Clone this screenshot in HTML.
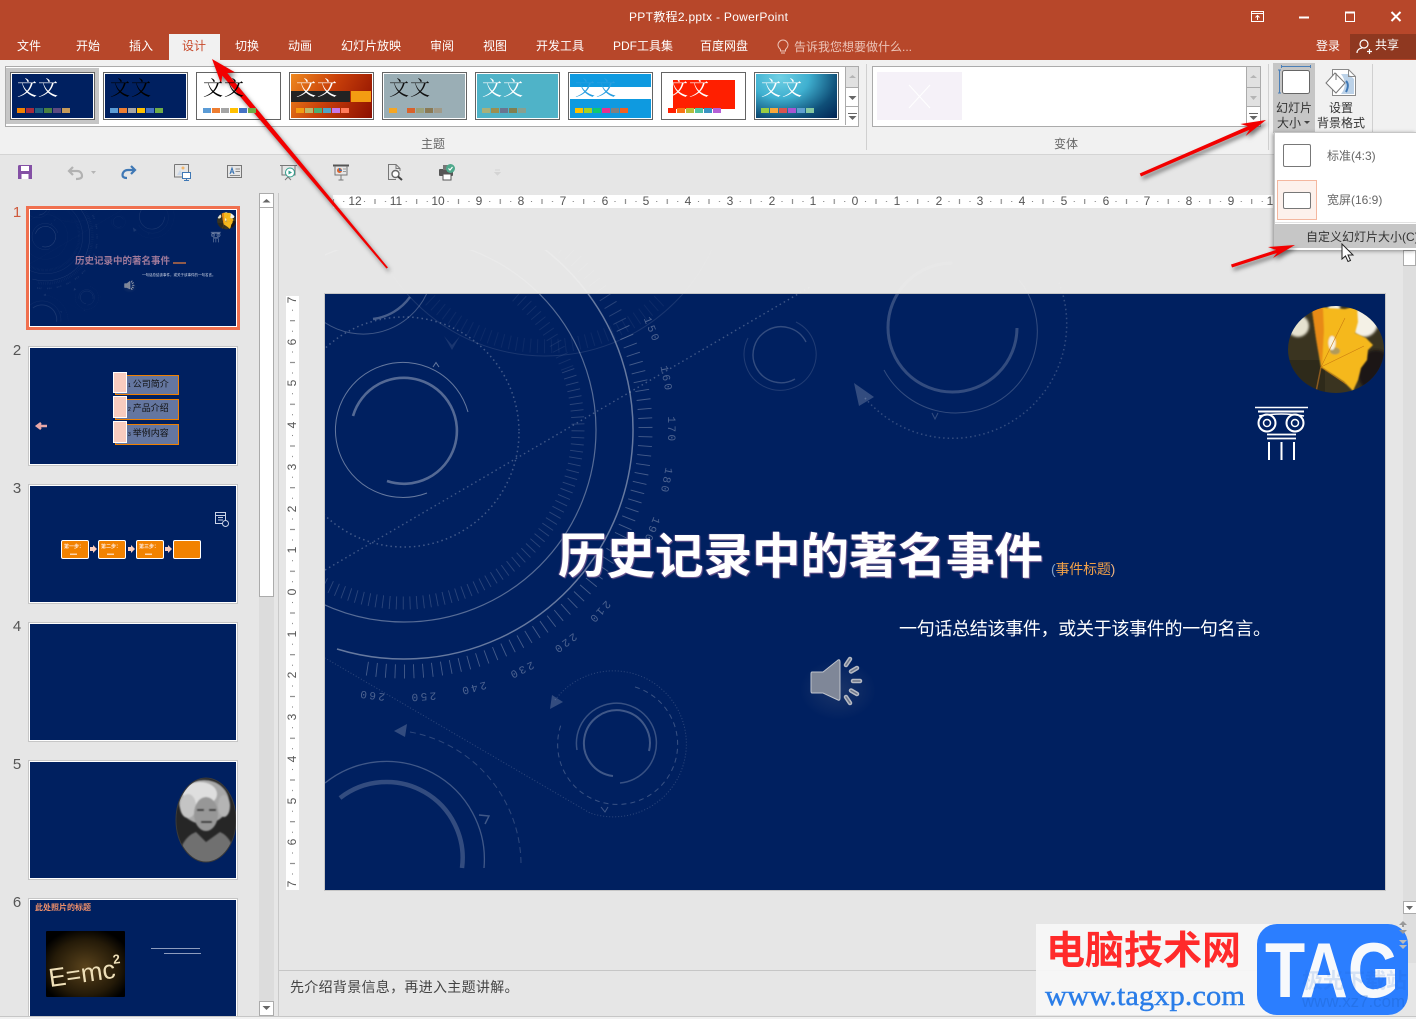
<!DOCTYPE html>
<html lang="zh-CN"><head><meta charset="utf-8"><title>PPT教程2.pptx - PowerPoint</title>
<style>
html,body{margin:0;padding:0}
body{width:1416px;height:1019px;position:relative;overflow:hidden;background:#e6e6e6;font-family:"Liberation Sans","Noto Sans CJK SC",sans-serif;font-size:12px;color:#444}
.a,.t,svg.a{position:absolute}
.t{white-space:nowrap;line-height:16px;display:block}
.tab{color:#fff;top:38px}
.th{position:absolute;top:72px;width:81px;height:44px;border:1px solid #646464;outline:0;box-shadow:inset 0 0 0 1px #fff;padding:1px;overflow:hidden;background:#002060;background-clip:padding-box}
.th b{position:absolute;left:6px;top:2px;font:400 20px/24px "Noto Serif CJK SC","Noto Sans CJK SC",serif;color:#fff;letter-spacing:1px;white-space:nowrap;z-index:2}
.sw{position:absolute;left:6px;top:35px;display:flex;gap:1px;z-index:3}
.sw i{display:block;width:8px;height:5px}
.sl{position:absolute;left:29px;width:206px;height:116px;background:#002060;border:1px solid #fff;outline:1px solid #c6c6c6;overflow:hidden}
.n{position:absolute;left:10px;width:14px;text-align:center;font-size:15px;line-height:18px;color:#555}
.sb{position:absolute;background:#fff;border:1px solid #ababab;box-sizing:border-box}
</style></head>
<body>
<!-- defs -->
<svg width="0" height="0" style="position:absolute">
<defs>
<filter id="soft" x="-5%" y="-5%" width="110%" height="110%"><feGaussianBlur stdDeviation=".7"/></filter>
<filter id="soft2" x="-20%" y="-20%" width="140%" height="140%"><feGaussianBlur stdDeviation="1.200"/></filter>
<radialGradient id="glow"><stop offset="0" stop-color="#30456f" stop-opacity=".55"/><stop offset="1" stop-color="#30456f" stop-opacity="0"/></radialGradient>
<g id="deco" fill="none" stroke="#fff">
 <!-- big ring -->
 <path d="M518.5 231.7A229 229 0 0 1 337 649" stroke-opacity=".4" stroke-width="1.500"/>
 <circle cx="404" cy="430" r="192" stroke-opacity=".34" stroke-width="1.200"/>
 <path d="M524.75 220.9A241.500 241.500 0 0 1 622.9 328" stroke-opacity=".16" stroke-width="14" stroke-dasharray=".9 8.4"/>
 <path d="M622.9 328A241.500 241.500 0 0 1 362 667.8" stroke-opacity=".27" stroke-width="14" stroke-dasharray=".9 8.4"/>
 <path d="M516.5 296A174.500 174.500 0 0 1 568 370.3" stroke-opacity=".08" stroke-width="13" stroke-dasharray=".9 5.9"/>
 <path d="M568 370.3A174.500 174.500 0 1 1 229 430" stroke-opacity=".17" stroke-width="13" stroke-dasharray=".9 5.9"/>
 <!-- dotted -->
 <circle cx="404" cy="432" r="115" stroke-opacity=".26" stroke-width="1.500" stroke-dasharray="1.5 3.2"/>
 <path d="M325 570L810 287" stroke-opacity=".25" stroke-width="1.400" stroke-dasharray="1.5 3.2"/>
 <!-- inner left circle -->
 <path d="M468 412A67.5 67.5 0 1 0 427 493" stroke-opacity=".4" stroke-width="1"/>
 <path d="M353 416A53 53 0 1 1 387 481" stroke-opacity=".33" stroke-width="2.600"/>
 <path d="M433 367l3-4.500 3 4.500" stroke-opacity=".4" stroke-width="1"/>
 <path d="M444 336l8 9 8-9-8 14z" fill="#fff" fill-opacity=".1" stroke="none"/>
 <!-- top arc -->
 <circle cx="545" cy="172" r="184" stroke-opacity=".1" stroke-width="1"/>
 <path d="M430 300A166 166 0 0 0 660 300" stroke-opacity=".05" stroke-width="14" stroke-dasharray="1 6"/>
 <path d="M324 322A70 70 0 0 0 427 293" stroke-opacity=".25" stroke-width="1"/>
 <path d="M373 319A54 54 0 0 0 410 297" stroke-opacity=".28" stroke-width="2.400"/>
 <!-- top right -->
 <path d="M1017 328A64.500 64.500 0 1 1 952.500 263" stroke-opacity=".2" stroke-width="3"/>
 <path d="M884 370A81.500 81.500 0 1 0 1019 280" stroke-opacity=".2" stroke-width="1"/>
 <path d="M865 398A114.500 114.500 0 0 0 1058 280" stroke-opacity=".2" stroke-width="1.500" stroke-dasharray="1.5 3"/>
 <path d="M854 383L874 397 859 406z" fill="#fff" fill-opacity=".2" stroke="none"/>
 <path d="M932 413l3 6 3-6" stroke-opacity=".2"/>
 <path d="M806 342A28 28 0 1 0 795 379" stroke-opacity=".2" stroke-width="1.400"/>
 <path d="M796 322A36 36 0 1 1 748 338" stroke-opacity=".13" stroke-width="1"/>
 <!-- mid bottom circle -->
 <path d="M577 750A40 40 0 1 1 620 783" stroke-opacity=".22" stroke-width="1.500"/>
 <path d="M649 751A33 33 0 1 0 613 776" stroke-opacity=".25" stroke-width="2"/>
 <path d="M635 687A60 60 0 1 1 562 722" stroke-opacity=".22" stroke-width="1" stroke-dasharray="5 4"/>
 <path d="M555 700A73 73 0 1 1 590 813L325 658" stroke-opacity=".18" stroke-width="1" stroke-dasharray="1 2"/>
 <path d="M552 695L550 709 563 702z" fill="#fff" fill-opacity=".2" stroke="none"/>
 <path d="M601 807l4 5 3-5" stroke-opacity=".25"/>
 <!-- bottom left -->
 <path d="M325 783A98 98 0 0 1 484 868" stroke-opacity=".25" stroke-width="1.300"/>
 <path d="M340 798A76 76 0 0 1 462 868" stroke-opacity=".2" stroke-width="4.500"/>
 <path d="M410 732A135 135 0 0 1 521 866" stroke-opacity=".18" stroke-width="1" stroke-dasharray="6 4"/>
 <path d="M394 731L407 724 405 737z" fill="#fff" fill-opacity=".2" stroke="none"/>
 <path d="M479 815l10 1-4 8" stroke-opacity=".25" stroke-width="1.400"/>
 <g fill="#fff" stroke="none" font-family="'Liberation Mono',monospace" font-size="11" letter-spacing="2.500" fill-opacity=".3" text-anchor="middle">
  <text x="672" y="434" transform="rotate(-22 404 430) rotate(90 672 430)">150</text>
  <text x="672" y="434" transform="rotate(-11 404 430) rotate(90 672 430)">160</text>
  <text x="672" y="434" transform="rotate(90 672 430)">170</text>
  <text x="672" y="434" transform="rotate(11 404 430) rotate(90 672 430)">180</text>
  <text x="672" y="434" transform="rotate(22 404 430) rotate(90 672 430)">190</text>
  <text x="672" y="434" transform="rotate(43 404 430) rotate(90 672 430)">210</text>
  <text x="672" y="434" transform="rotate(53 404 430) rotate(90 672 430)">220</text>
  <text x="672" y="434" transform="rotate(64 404 430) rotate(90 672 430)">230</text>
  <text x="672" y="434" transform="rotate(75 404 430) rotate(90 672 430)">240</text>
  <text x="672" y="434" transform="rotate(86 404 430) rotate(90 672 430)">250</text>
  <text x="672" y="434" transform="rotate(97 404 430) rotate(90 672 430)">260</text>
 </g>
</g>
<g id="leaf">
 <clipPath id="lc"><ellipse cx="1336" cy="349.500" rx="48" ry="43.500"/></clipPath>
 <g clip-path="url(#lc)">
  <rect x="1285" y="304" width="102" height="92" fill="#3a3420"/>
  <rect x="1285" y="360" width="40" height="36" fill="#2e2a1a"/>
  <g filter="url(#soft2)">
   <ellipse cx="1298" cy="326" rx="11" ry="11" fill="#e6e2cf"/>
   <ellipse cx="1364" cy="322" rx="14" ry="15" fill="#f4f1e6"/>
   <rect x="1328" y="302" width="12" height="20" fill="#f5f2e6"/>
   <ellipse cx="1376" cy="372" rx="18" ry="22" fill="#1c1916"/>
  </g>
  <path d="M1321 367L1316 392" stroke="#8a5a20" stroke-width="1.500"/>
  <g filter="url(#soft)">
   <path d="M1312 310L1318 306 1328 308 1345 309 1357 306 1358 322 1355 333 1366 338 1373 345 1368 350 1367 360 1361 368 1358 380 1353 391 1344 382 1335 376 1327 371 1321 367 1318 350 1316 338z" fill="#f5b81e"/>
   <path d="M1312 310L1318 306 1323 308 1324 330 1322 366 1318 350 1316 338z" fill="#e88a14"/>
   <ellipse cx="1335" cy="351" rx="5" ry="3.500" fill="#b09a5a"/>
   <ellipse cx="1332" cy="343" rx="3.500" ry="7" fill="#f6f2e2"/>
  </g>
  <path d="M1321 367L1364 346M1321 367L1345 318M1321 367L1346 384" stroke="#c97a10" stroke-width=".6" fill="none"/>
 </g>
</g>
<g id="column" fill="none" stroke="#fff">
 <path d="M1255 407.500H1308" stroke-width="1.500"/><path d="M1258 411.500H1304" stroke-width="2"/>
 <path d="M1259 416Q1281 412 1304 416" stroke-width="1.500"/>
 <circle cx="1267" cy="423" r="8.500" stroke-width="2"/><circle cx="1267" cy="423" r="3.500" stroke-width="1.500"/>
 <circle cx="1295" cy="423" r="8.500" stroke-width="2"/><circle cx="1295" cy="423" r="3.500" stroke-width="1.500"/>
 <path d="M1267 434.500H1296M1267 438.500H1296" stroke-width="1.800"/>
 <path d="M1269 442V460M1281.500 442V460M1294 442V460" stroke-width="2"/>
</g>
<g id="speaker">
 <ellipse cx="838" cy="690" rx="38" ry="30" fill="url(#glow)"/>
 <path d="M812 672H823L838 660Q840 659 840 662V698Q840 701 838 700L823 693H812Q811 693 811 691V674Q811 672 812 672Z" fill="#7f8798" stroke="#c0c4cc" stroke-width="1"/>
 <g stroke="#b6bac3" stroke-width="4.500" stroke-linecap="round" fill="none">
  <path d="M846 665L850 659M851 671.500L857 668M853 681H860M851 690.500L857 694M846 697L850 703"/>
 </g>
 <g stroke="#6d7588" stroke-width="1.500" stroke-linecap="round" fill="none">
  <path d="M846 665L850 659M851 671.500L857 668M853 681H860M851 690.500L857 694M846 697L850 703"/>
 </g>
</g>
<pattern id="rh" x="855" y="195" width="41.750" height="13" patternUnits="userSpaceOnUse">
 <rect x="10" y="6" width="1" height="1" fill="#777"/><rect x="20.500" y="4" width="1" height="5" fill="#777"/><rect x="31" y="6" width="1" height="1" fill="#777"/>
</pattern>
<pattern id="rv" x="286" y="592" width="13" height="41.750" patternUnits="userSpaceOnUse">
 <rect y="10" x="6" width="1" height="1" fill="#777"/><rect y="20.500" x="4" width="5" height="1" fill="#777"/><rect y="31" x="6" width="1" height="1" fill="#777"/>
</pattern>
<radialGradient id="emc" cx=".5" cy=".55" r=".6"><stop offset="0" stop-color="#5a431c"/><stop offset=".7" stop-color="#241a08"/><stop offset="1" stop-color="#000"/></radialGradient>
</defs>
</svg>

<!-- title bar -->
<div class="a" style="left:0;top:0;width:1416px;height:60px;background:#b7472a"></div>
<span class="t" style="left:629px;top:9px;color:#fff;letter-spacing:.3px">PPT教程2.pptx - PowerPoint</span>
<svg class="a" style="left:1245px;top:5px" width="160" height="22" fill="none" stroke="#fff">
 <path d="M6.500 6.500H18.500V16.500H6.500Z M6.500 8.500H18.500"/><path d="M12.500 15V10.500M10.500 12.500L12.500 10.500 14.500 12.500"/>
 <path d="M54 12.500H64" stroke-width="2"/>
 <path d="M100.500 7H109.500V16.500H100.500Z" stroke-width="1"/><path d="M100 7.500H110" stroke-width="2"/>
 <path d="M146.500 7L155.500 16M155.500 7L146.500 16" stroke-width="2"/>
</svg>
<div class="a" style="left:169px;top:34px;width:51px;height:26px;background:#f1f1f1"></div>
<span class="t tab" style="left:17px">文件</span>
<span class="t tab" style="left:76px">开始</span>
<span class="t tab" style="left:129px">插入</span>
<span class="t tab" style="left:182px;color:#c8492a">设计</span>
<span class="t tab" style="left:235px">切换</span>
<span class="t tab" style="left:288px">动画</span>
<span class="t tab" style="left:341px">幻灯片放映</span>
<span class="t tab" style="left:430px">审阅</span>
<span class="t tab" style="left:483px">视图</span>
<span class="t tab" style="left:536px">开发工具</span>
<span class="t tab" style="left:613px">PDF工具集</span>
<span class="t tab" style="left:700px">百度网盘</span>
<svg class="a" style="left:776px;top:39px" width="14" height="16" fill="none" stroke="#ecc4b8"><path d="M4.500 10.500C3 9 2 8 2 6A5 5 0 0 1 12 6C12 8 11 9 9.500 10.500V12H4.500Z"/><path d="M5 14H9"/></svg>
<span class="t tab" style="left:794px;color:#ecc4b8;top:39px">告诉我您想要做什么...</span>
<span class="t tab" style="left:1316px">登录</span>
<div class="a" style="left:1350px;top:34px;width:66px;height:25px;background:#8f3820"></div>
<svg class="a" style="left:1356px;top:38px" width="18" height="17" fill="none" stroke="#fff" stroke-width="1.200"><circle cx="8" cy="6" r="4"/><path d="M1 15C1 12 3 10.500 6 10M11 13.500H16M13.500 11V16"/></svg>
<span class="t tab" style="left:1375px;top:37px">共享</span>

<!-- ribbon -->
<div class="a" style="left:0;top:60px;width:1416px;height:94px;background:#f1f1f1;border-bottom:1px solid #d4d4d4"></div>
<div class="a" style="left:5px;top:66px;width:852px;height:59px;background:#fff;border:1px solid #ababab"></div>
<div class="a" style="left:6px;top:68px;width:93px;height:56px;background:#c6c6c6"></div>

<div class="th" style="left:10px"><b>文文</b><div class="sw"><i style="background:#f28200"></i><i style="background:#a52a3c"></i><i style="background:#1f5f7f"></i><i style="background:#4a8040"></i><i style="background:#5c4a80"></i><i style="background:#c49a5a"></i></div></div>
<div class="th" style="left:103px"><b style="color:#000">文文</b><div class="sw"><i style="background:#5b9bd5"></i><i style="background:#ed7d31"></i><i style="background:#a5a5a5"></i><i style="background:#ffc000"></i><i style="background:#4472c4"></i><i style="background:#70ad47"></i></div></div>
<div class="th" style="left:196px;background:#fff"><b style="color:#000">文文</b><div class="sw"><i style="background:#5b9bd5"></i><i style="background:#ed7d31"></i><i style="background:#a5a5a5"></i><i style="background:#ffc000"></i><i style="background:#4472c4"></i><i style="background:#70ad47"></i></div></div>
<div class="th" style="left:289px;background:linear-gradient(120deg,#ef8a1f 0%,#c9400a 45%,#8a0d00 100%)"><div class="a" style="left:1px;top:18px;width:59px;height:11px;background:#232323"></div><div class="a" style="left:61px;top:18px;width:20px;height:11px;background:#f39c12"></div><b>文文</b><div class="sw"><i style="background:#f39c12"></i><i style="background:#b9b86a"></i><i style="background:#4caf72"></i><i style="background:#4fa3c4"></i><i style="background:#c678e8"></i><i style="background:#ff7b5a"></i></div></div>
<div class="th" style="left:382px;background:#9aaeb5"><b style="color:#111">文文</b><div class="sw"><i style="background:#f5a623"></i><i style="background:#9aaeb5"></i><i style="background:#d9622b"></i><i style="background:#9aa07a"></i><i style="background:#8a7a55"></i><i style="background:#a09a88"></i></div></div>
<div class="th" style="left:475px;background:#4fb3c8"><b>文文</b><div class="sw"><i style="background:#a8b07a"></i><i style="background:#9a8f50"></i><i style="background:#6a7590"></i><i style="background:#808050"></i><i style="background:#88a090"></i></div></div>
<div class="th" style="left:568px;background:#fff"><div class="a" style="left:1px;top:1px;width:81px;height:13px;background:#0e9ae0"></div><div class="a" style="left:1px;top:26px;width:81px;height:19px;background:#0e9ae0"></div><b style="color:#2a9fe0">文文</b><div class="sw"><i style="background:#ffc000"></i><i style="background:#a8d020"></i><i style="background:#10c870"></i><i style="background:#e83090"></i><i style="background:#808080"></i><i style="background:#f06020"></i></div></div>
<div class="th" style="left:661px;background:#fff"><div class="a" style="left:11px;top:7px;width:62px;height:29px;background:#ff1f00"></div><b>文文</b><div class="sw"><i style="background:#ff1f00"></i><i style="background:#f97316"></i><i style="background:#b5bd3a"></i><i style="background:#4fc3a1"></i><i style="background:#3b93c3"></i><i style="background:#b55fd6"></i></div></div>
<div class="th" style="left:754px;background:radial-gradient(ellipse at 30% 10%,#6fd0e4 0%,#3fb0d0 35%,#0f4f78 70%,#002050 100%)"><b>文文</b><div class="sw"><i style="background:#9acd42"></i><i style="background:#f9a83a"></i><i style="background:#d9534f"></i><i style="background:#a855d0"></i><i style="background:#5f9fd0"></i><i style="background:#85c8a0"></i></div></div>

<div class="a" style="left:845px;top:67px;width:12px;height:20px;background:#e1e1e1;border-left:1px solid #ababab;border-bottom:1px solid #ababab"></div>
<div class="a" style="left:845px;top:88px;width:12px;height:18px;background:#fff;border-left:1px solid #ababab;border-bottom:1px solid #ababab"></div>
<div class="a" style="left:845px;top:107px;width:12px;height:18px;background:#fff;border-left:1px solid #ababab"></div>
<svg class="a" style="left:845px;top:67px" width="14" height="60" fill="#666"><path d="M4 11L7.500 8 11 11z" fill="#b5b5b5"/><path d="M3.500 29H11.500L7.500 33z"/><path d="M3 46H12V47H3zM3.500 49H11.500L7.500 53z"/></svg>

<div class="a" style="left:872px;top:66px;width:387px;height:59px;background:#fff;border:1px solid #ababab"></div>
<div class="a" style="left:877px;top:72px;width:85px;height:48px;background:#f5f1f8"></div>
<svg class="a" style="left:877px;top:72px" width="85" height="48" stroke="#fff" stroke-width="1"><path d="M32 13L53 36M53 13L32 36"/></svg>
<div class="a" style="left:1246px;top:67px;width:13px;height:20px;background:#e1e1e1;border-left:1px solid #ababab;border-bottom:1px solid #ababab"></div>
<div class="a" style="left:1246px;top:88px;width:13px;height:18px;background:#e1e1e1;border-left:1px solid #ababab;border-bottom:1px solid #ababab"></div>
<div class="a" style="left:1246px;top:107px;width:13px;height:18px;background:#fff;border-left:1px solid #ababab"></div>
<svg class="a" style="left:1246px;top:67px" width="14" height="60" fill="#666"><path d="M4 11L7.500 8 11 11z" fill="#b5b5b5"/><path d="M4 29H11L7.500 33z" fill="#b5b5b5"/><path d="M3 46H12V47H3zM3.500 49H11.500L7.500 53z"/></svg>

<span class="t" style="left:421px;top:136px;color:#666">主题</span>
<span class="t" style="left:1054px;top:136px;color:#666">变体</span>
<div class="a" style="left:866px;top:64px;width:1px;height:86px;background:#d0d0d0"></div>
<div class="a" style="left:1268px;top:64px;width:1px;height:86px;background:#d0d0d0"></div>
<div class="a" style="left:1372px;top:64px;width:1px;height:68px;background:#d0d0d0"></div>

<div class="a" style="left:1273px;top:63px;width:42px;height:70px;background:#c6c6c6"></div>
<svg class="a" style="left:1276px;top:64px" width="40" height="32" fill="none"><rect x="6.500" y="6.500" width="27" height="23" rx="2" fill="#fff" stroke="#666"/><path d="M5.500 2.500H34.500M5.500 1V4M34.500 1V4M3.500 6V29M2 6H5M2 29H5" stroke="#4a7fb8"/></svg>
<span class="t" style="left:1276px;top:100px;color:#333">幻灯片</span>
<span class="t" style="left:1277px;top:115px;color:#333">大小</span>
<svg class="a" style="left:1303px;top:120px" width="8" height="6"><path d="M1 1H7L4 4z" fill="#444"/></svg>
<svg class="a" style="left:1324px;top:66px" width="36" height="32" fill="none"><path d="M8.500 3.500H24.500L31.500 10.500V29.500H8.500Z" fill="#fff" stroke="#8a8a8a"/><path d="M17 8H24.500L30 13V28H17C22 22 22 14 17 8Z" fill="#bcd2e8"/><path d="M24.500 3.500V10.500H31.500" stroke="#8a8a8a"/><path d="M11 7L21 17 12 27 2 17Z" fill="#fff" stroke="#777"/><path d="M12 7V14" stroke="#777"/><path d="M22 15C25 18 24 22 22 26" stroke="#3f78b5" stroke-width="2"/></svg>
<span class="t" style="left:1329px;top:100px;color:#333">设置</span>
<span class="t" style="left:1317px;top:115px;color:#333">背景格式</span>

<!-- QAT -->
<svg class="a" style="left:0;top:155px" width="510" height="34" fill="none">
 <g transform="translate(18 10)"><path d="M0 1.500Q0 0 1.500 0H14V14H0Z" fill="#8450a5"/><rect x="3" y="1" width="8" height="5" fill="#fff"/><rect x="3.500" y="9" width="7" height="5" fill="#fff"/></g>
 <path d="M73 12L69 16 73 20M69 16H77C81 16 82 19 82 21S80 24 76 24" stroke="#b2b2b2" stroke-width="2.200"/>
 <path d="M91 16H96L93.500 19z" fill="#b5b5b5"/>
 <path d="M131 11L135 15 131 19M135 15H128C124 15 122.500 18 122.500 20S124 23 127 23" stroke="#3f78b5" stroke-width="2.200"/>
 <g transform="translate(174 9)"><path d="M.5 .5H14.500V12H10" stroke="#777"/><path d="M.5 .5V13H8" stroke="#777"/><path d="M3 11L6 6 9 11z" fill="#c9d8ea"/><circle cx="9" cy="4" r="1.500" fill="#f2b56a"/><rect x="8.500" y="8.500" width="8" height="6" fill="#fff" stroke="#3f78b5"/><path d="M12.500 15V16M10 16.500H15" stroke="#3f78b5"/></g>
 <g transform="translate(227 10)"><rect x=".5" y=".5" width="14" height="12" stroke="#777"/><path d="M3 9L5 3 7 9M3.800 7H6.200" stroke="#2f6db0"/><path d="M8.500 4H13M8.500 6.500H13M3 10.500H13" stroke="#888"/></g>
 <g transform="translate(280 9)"><path d="M0 1.500H17M2 1.500V11H15V1.500" stroke="#777"/><circle cx="10" cy="8.500" r="4.500" fill="#fff" stroke="#2f9e8c"/><path d="M8.500 6.500L12 8.500 8.500 10.500z" fill="#2f9e8c"/><path d="M8 13L5 16M8 13L11 16" stroke="#777"/></g>
 <g transform="translate(333 9)"><path d="M0 1.500H16" stroke="#555" stroke-width="2"/><path d="M2 2V11H14V2" stroke="#777"/><circle cx="6.500" cy="6.500" r="2.500" fill="#d9622b"/><path d="M6.500 4V6.500H9" fill="#3f78b5" stroke="#3f78b5"/><path d="M10 5H13M10 7.500H13" stroke="#999"/><path d="M8 11V16M5.500 16H10.500" stroke="#777"/></g>
 <g transform="translate(388 9)"><path d="M8 15.500H.5V.5H8L12 4.500V7M8 .5V4.500H12" stroke="#777"/><circle cx="7.500" cy="10" r="3.500" fill="#fff" stroke="#666" stroke-width="1.400"/><path d="M10 12.500L14 16" stroke="#444" stroke-width="2"/></g>
 <g transform="translate(439 9)"><rect x="0" y="5" width="14" height="7" rx="1" fill="#555"/><rect x="4" y="1" width="6" height="5" fill="#777"/><rect x="4" y="10" width="8" height="6" fill="#fff" stroke="#555"/><circle cx="11.500" cy="4.500" r="4.500" fill="#4fa98c"/><path d="M9.500 4.500L11 6 13.500 3" stroke="#fff" stroke-width="1.200"/></g>
 <path d="M495 15H500M495 17.500H500L497.500 20z" stroke="#d4d4d4" fill="#d4d4d4"/>
</svg>

<!-- rulers -->
<svg class="a" style="left:0;top:0" width="1416" height="1019" font-family="'Liberation Sans',sans-serif" font-size="12" fill="#555" text-anchor="middle">
 <rect x="333" y="195" width="940" height="13" fill="#fff"/>
 <rect x="333" y="195" width="940" height="13" fill="url(#rh)"/>
 <text x="355" y="205">12</text><text x="396" y="205">11</text><text x="438" y="205">10</text><text x="479" y="205">9</text><text x="521" y="205">8</text><text x="563" y="205">7</text><text x="605" y="205">6</text><text x="646" y="205">5</text><text x="688" y="205">4</text><text x="730" y="205">3</text><text x="772" y="205">2</text><text x="813" y="205">1</text><text x="855" y="205">0</text><text x="897" y="205">1</text><text x="939" y="205">2</text><text x="980" y="205">3</text><text x="1022" y="205">4</text><text x="1064" y="205">5</text><text x="1106" y="205">6</text><text x="1147" y="205">7</text><text x="1189" y="205">8</text><text x="1231" y="205">9</text><text x="1270" y="205">1</text>
 <rect x="286" y="296" width="13" height="594" fill="#fff"/>
 <rect x="286" y="296" width="13" height="594" fill="url(#rv)"/>
 <g transform="translate(296 0)">
  <text transform="translate(0 300) rotate(-90)">7</text><text transform="translate(0 342) rotate(-90)">6</text><text transform="translate(0 383) rotate(-90)">5</text><text transform="translate(0 425) rotate(-90)">4</text><text transform="translate(0 467) rotate(-90)">3</text><text transform="translate(0 509) rotate(-90)">2</text><text transform="translate(0 550) rotate(-90)">1</text><text transform="translate(0 592) rotate(-90)">0</text><text transform="translate(0 634) rotate(-90)">1</text><text transform="translate(0 675) rotate(-90)">2</text><text transform="translate(0 717) rotate(-90)">3</text><text transform="translate(0 759) rotate(-90)">4</text><text transform="translate(0 801) rotate(-90)">5</text><text transform="translate(0 842) rotate(-90)">6</text><text transform="translate(0 884) rotate(-90)">7</text>
 </g>
</svg>

<!-- faint arcs above the slide -->
<svg class="a" style="left:325px;top:250px;opacity:.55" width="1060" height="44" viewBox="325 250 1060 44"><use href="#deco"/></svg>

<!-- main slide -->
<div class="a" style="left:324px;top:293px;width:1060px;height:596px;background:#002060;border:1px solid #c6c6c6"></div>
<svg class="a" style="left:325px;top:294px" width="1060" height="596" viewBox="325 294 1060 596"><use href="#deco"/><use href="#leaf"/><use href="#column"/><use href="#speaker"/></svg>
<span class="t" style="left:558px;top:529px;font-size:48.500px;line-height:56px;font-weight:700;color:#fff;text-shadow:1px 1px 1px #7a5f95,-1px 0 1px #5c4f88">历史记录中的著名事件</span>
<span class="t" style="left:1051px;top:561px;font-size:14px;color:#f0a048;letter-spacing:-.2px"><span style="color:#7fa0c8">(</span>事件标题<span style="color:#e8b080">)</span></span>
<span class="t" style="left:899px;top:618px;font-size:18px;line-height:22px;color:#fff;letter-spacing:-.3px">一句话总结该事件，或关于该事件的一句名言。</span>

<!-- thumbnails -->
<span class="n" style="top:204px;color:#cf5a3c">1</span>
<div class="a" style="left:26px;top:206px;width:208px;height:118px;border:3px solid #f0704f"></div>
<div class="sl" style="top:209px;outline:0">
 <svg class="a" style="left:0;top:0" width="206" height="116" viewBox="325 294 1060 596"><g opacity=".5"><use href="#deco"/></g><use href="#leaf"/><g opacity=".7"><use href="#column"/></g><use href="#speaker"/></svg>
 <span class="t" style="left:45px;top:45px;font-size:9.500px;line-height:14px;font-weight:700;color:#a97f9e;opacity:.95">历史记录中的著名事件</span>
 <span class="a" style="left:143px;top:52px;width:13px;height:2px;background:#8f5a4a"></span>
 <span class="t" style="left:112px;top:61px;font-size:3.500px;line-height:8px;color:#d5dcea;letter-spacing:0">一句话总结该事件，或关于该事件的一句名言。</span>
</div>
<span class="n" style="top:342px">2</span>
<div class="sl" style="top:347px">
 <svg class="a" style="left:0;top:0" width="206" height="116" fill="none"><path d="M17 78H7M11 75L7 78 11 81" stroke="#e8a7a7" stroke-width="2.500"/></svg>
 <div class="a" style="left:85px;top:27px;width:62px;height:18px;background:#6476a0;border:1px solid #f08000"></div>
 <div class="a" style="left:85px;top:51px;width:62px;height:19px;background:#6476a0;border:1px solid #f08000"></div>
 <div class="a" style="left:85px;top:76px;width:62px;height:19px;background:#6476a0;border:1px solid #f08000"></div>
 <div class="a" style="left:83px;top:24px;width:12px;height:19px;background:#f8ccbf;border:1px solid #fff"></div>
 <div class="a" style="left:83px;top:48px;width:12px;height:20px;background:#f8ccbf;border:1px solid #fff"></div>
 <div class="a" style="left:83px;top:73px;width:12px;height:20px;background:#f8ccbf;border:1px solid #fff"></div>
 <span class="t" style="left:98px;top:28px;font-size:9px;color:#111"><span style="font-size:5px;margin-right:2px">1</span>公司简介</span>
 <span class="t" style="left:98px;top:52px;font-size:9px;color:#111"><span style="font-size:5px;margin-right:2px">2</span>产品介绍</span>
 <span class="t" style="left:98px;top:77px;font-size:9px;color:#111"><span style="font-size:5px;margin-right:2px">3</span>举例内容</span>
</div>
<span class="n" style="top:480px">3</span>
<div class="sl" style="top:485px">
 <div class="a" style="left:31px;top:54px;width:26px;height:17px;background:#f28200;border:1px solid #fff;border-radius:2px"></div>
 <div class="a" style="left:68px;top:54px;width:26px;height:17px;background:#f28200;border:1px solid #fff;border-radius:2px"></div>
 <div class="a" style="left:106px;top:54px;width:26px;height:17px;background:#f28200;border:1px solid #fff;border-radius:2px"></div>
 <div class="a" style="left:143px;top:54px;width:26px;height:17px;background:#f28200;border:1px solid #fff;border-radius:2px"></div>
 <span class="t" style="left:34px;top:56px;font-size:5px;line-height:10px;color:#ffe8d8;font-weight:700">第一步：</span>
 <span class="t" style="left:71px;top:56px;font-size:5px;line-height:10px;color:#ffe8d8;font-weight:700">第二步：</span>
 <span class="t" style="left:109px;top:56px;font-size:5px;line-height:10px;color:#ffe8d8;font-weight:700">第三步：</span>
 <svg class="a" style="left:0;top:0" width="206" height="116"><g fill="#f8ccbf"><path d="M60 61H63V59L67 63 63 67V65H60Z"/><path d="M98 61H101V59L105 63 101 67V65H98Z"/><path d="M135 61H138V59L142 63 138 67V65H135Z"/></g><g fill="#ffe8d8" fill-opacity=".8"><rect x="40" y="67.500" width="7" height="1.500"/><rect x="77" y="67.500" width="7" height="1.500"/><rect x="115" y="67.500" width="7" height="1.500"/></g><g fill="none" stroke="#c9d2e6"><rect x="185.500" y="26.500" width="10" height="11"/><path d="M185.500 29.500H195.500M188 31.500H193M188 34H193"/><circle cx="195.500" cy="37.500" r="3" fill="#002060"/></g></svg>
</div>
<span class="n" style="top:618px">4</span>
<div class="sl" style="top:623px"></div>
<span class="n" style="top:756px">5</span>
<div class="sl" style="top:761px">
 <svg class="a" style="left:0;top:0" width="206" height="116"><clipPath id="ec"><ellipse cx="176" cy="58" rx="30" ry="42"/></clipPath><g clip-path="url(#ec)"><rect x="145" y="16" width="62" height="84" fill="#262626"/><g filter="url(#soft)"><ellipse cx="174" cy="40" rx="25" ry="22" fill="#a8a8a8"/><ellipse cx="170" cy="32" rx="17" ry="12" fill="#dedede"/><ellipse cx="158" cy="44" rx="8" ry="12" fill="#c4c4c4"/><ellipse cx="194" cy="44" rx="6" ry="11" fill="#b4b4b4"/><ellipse cx="176" cy="52" rx="12" ry="17" fill="#979797"/><path d="M167 48H174M179 48H186M171 60H182" stroke="#2c2c2c" stroke-width="2"/><path d="M148 101Q150 76 166 70L176 80 190 70Q204 76 206 101Z" fill="#6f6f6f"/></g></g><ellipse cx="176" cy="58" rx="30" ry="42" fill="none" stroke="#3a3a3a"/></svg>
</div>
<span class="n" style="top:894px">6</span>
<div class="sl" style="top:899px">
 <span class="t" style="left:5px;top:1px;font-size:8px;line-height:14px;color:#f0906a;font-weight:700">此处照片的标题</span>
 <svg class="a" style="left:0;top:0" width="206" height="116"><rect x="16" y="31" width="79" height="66" rx="1" fill="url(#emc)"/><g transform="rotate(-8 55 70)"><text x="18" y="82" font-family="'Liberation Sans',sans-serif" font-size="26" fill="#eedfb8" textLength="67" lengthAdjust="spacingAndGlyphs">E=mc</text><text x="84" y="68" font-family="'Liberation Sans',sans-serif" font-weight="700" font-size="13" fill="#eedfb8">2</text></g><rect x="121" y="48" width="49" height="1" fill="#c9d2e6" fill-opacity=".7"/><rect x="134" y="53" width="37" height="1" fill="#c9d2e6" fill-opacity=".7"/></svg>
</div>

<!-- thumb scrollbar -->
<div class="a" style="left:259px;top:193px;width:15px;height:823px;background:#dcdcdc"></div>
<div class="sb" style="left:259px;top:193px;width:15px;height:15px"></div>
<div class="sb" style="left:259px;top:207px;width:15px;height:390px"></div>
<div class="sb" style="left:259px;top:1001px;width:15px;height:15px"></div>
<svg class="a" style="left:259px;top:193px" width="15" height="823"><path d="M3.500 9.500L7.500 6 11.500 9.500z" fill="#666"/><path d="M3.500 813H11.500L7.500 817z" fill="#666"/></svg>
<div class="a" style="left:278px;top:193px;width:1px;height:824px;background:#c9c9c9"></div>

<!-- right scrollbar -->
<div class="a" style="left:1403px;top:208px;width:13px;height:755px;background:#dedede"></div>
<div class="sb" style="left:1403px;top:250px;width:13px;height:16px"></div>
<div class="sb" style="left:1403px;top:901px;width:14px;height:13px"></div>
<svg class="a" style="left:1403px;top:901px" width="13" height="13"><path d="M3 5H10L6.500 9z" fill="#666"/></svg>

<!-- notes -->
<div class="a" style="left:279px;top:970px;width:1124px;height:1px;background:#c6c6c6"></div>
<span class="t" style="left:290px;top:979px;font-size:14px;color:#444;letter-spacing:.3px">先介绍背景信息，再进入主题讲解。</span>
<div class="a" style="left:0;top:1016px;width:1416px;height:1px;background:#c6c6c6"></div>
<div class="a" style="left:0;top:1017px;width:1416px;height:2px;background:#f1f1f1"></div>

<!-- dropdown -->
<div class="a" style="left:1274px;top:132px;width:142px;height:118px;background:#fff;box-shadow:-1px 1px 4px rgba(0,0,0,.4);border-left:1px solid #c6c6c6;border-top:1px solid #c6c6c6;box-sizing:border-box"></div>
<div class="a" style="left:1283px;top:144px;width:26px;height:21px;border:1px solid #777;border-radius:2px;background:#fff"></div>
<span class="t" style="left:1327px;top:148px;color:#666">标准(4:3)</span>
<div class="a" style="left:1277px;top:180px;width:38px;height:38px;background:#fdf1ec;border:1px solid #f4b79f"></div>
<div class="a" style="left:1283px;top:192px;width:26px;height:15px;border:1px solid #777;border-radius:2px;background:#fff"></div>
<span class="t" style="left:1327px;top:192px;color:#666">宽屏(16:9)</span>
<div class="a" style="left:1275px;top:222px;width:141px;height:1px;background:#e2e2e2"></div>
<div class="a" style="left:1275px;top:224px;width:141px;height:24px;background:#c6c6c6"></div>
<span class="t" style="left:1306px;top:229px;color:#333;width:110px;overflow:hidden">自定义幻灯片大小(C)</span>
<svg class="a" style="left:1341px;top:243px" width="14" height="20"><path d="M1 1V16L4.500 13 7 18.500 9.500 17.500 7 12H12Z" fill="#fff" stroke="#222"/></svg>

<!-- watermark -->
<div class="a" style="left:1036px;top:924px;width:240px;height:91px;background:rgba(247,247,247,.92)"></div>
<span class="t" style="left:1046px;top:928px;font-size:39px;line-height:48px;font-weight:700;color:#ff2a2a;letter-spacing:0">电脑技术网</span>
<svg class="a" style="left:1036px;top:920px" width="380" height="99">
 <text x="9" y="85" font-family="'Liberation Serif',serif" font-size="29" fill="#2a7de8" stroke="#2a7de8" stroke-width=".4" textLength="200" lengthAdjust="spacingAndGlyphs">www.tagxp.com</text>
 <rect x="221" y="4" width="151" height="91" rx="20" fill="#2b7eff"/>
 <text x="229" y="77" font-family="'Liberation Sans',sans-serif" font-weight="700" font-size="78" fill="#f7f9fc" textLength="134" lengthAdjust="spacingAndGlyphs">TAG</text>
 <text x="266" y="68" font-family="'Liberation Sans','Noto Sans CJK SC',sans-serif" font-size="21" fill="#1f66d0" fill-opacity=".16" font-weight="700">极光下载站</text>
 <text x="266" y="87" font-family="'Liberation Sans',sans-serif" font-size="17" fill="#1f66d0" fill-opacity=".45" textLength="103" lengthAdjust="spacingAndGlyphs">www.xz7.com</text>
 <path d="M368 1L372 5H369V7H367V5H364Z M364 10L368 14 372 10Z" fill="#999" transform="translate(-1 0)"/>
 <path d="M364 21H372L368 25ZM364 26H372L368 30Z" fill="#bbb" transform="translate(-1 -1)"/>
</svg>

<!-- red arrows -->
<svg class="a" style="left:0;top:0;filter:drop-shadow(2px 3px 2px rgba(0,0,0,.5))" width="1416" height="1019" fill="#f20000">
 <polygon points="212,59 234.900,72.200 227.300,73 388,267.500 386.400,268.500 222.300,75.600 221.100,83.800"/>
 <polygon points="1266,120 1245.600,136 1249.500,129.800 1141,176.500 1139.700,173.500 1247.900,126.200 1240.400,124"/>
 <polygon points="1295,245 1273,258 1277,253 1232,267.500 1231,264.500 1276,250 1268,247"/>
</svg>
</body></html>
